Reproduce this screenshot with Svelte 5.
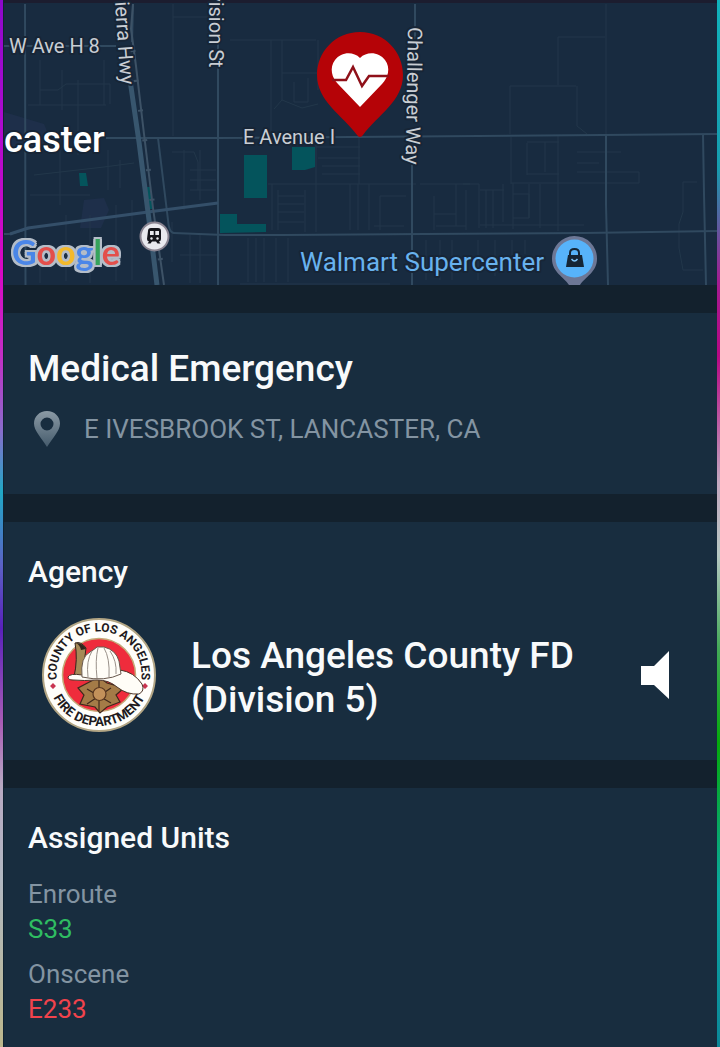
<script lang="ts">
	const title = 'Medical Emergency';
	const address = 'E IVESBROOK ST, LANCASTER, CA';
	const agency = 'Los Angeles County FD (Division 5)';

	const units = [
		{ status: 'Enroute', kind: 'enroute', names: ['S33'] },
		{ status: 'Onscene', kind: 'onscene', names: ['E233'] }
	];

	const parks = [
		'M244 155h23v43h-23z',
		'M292 147h23v20l-10 3h-13z',
		'M220 214h17v10h29v8l-46 1z',
		'M79 173h7l2 13h-8z',
		'M145 187h5l3 22h-6z'
	];

	const minorRoads = [
		'M40 60v45M62 70v40M78 80v75M104 60v45M40 90h18l8 -6h44v20M28 105h78M173 4v132M173 17h43',
		'M34 175l70 -8 30 -4M60 150v55M108 150v40M120 160v28M30 195h60M40 245v38M66 215v66M90 215v68M116 205v76M132 200v80',
		'M184 150v60M190 170h26M190 180h26M190 190h26M200 150v50M172 152h22l4 10v28M172 222v40M180 255h38M190 235v48M200 235v48',
		'M230 40h86M271 40v95M282 40v60l-8 9M318 40v50M282 73h36M294 82v20h14v-24M282 100l20 8 16 -4M316 136v96M316 147h44M318 158h42M322 166h38M322 174h38M359 137v47',
		'M268 184h148M272 184v46M278 190v40M278 196h26M278 204h26M278 212h26M278 222h26M305 190v42M350 184v46M358 184v46M369 184v46M380 196v34M380 196h26M374 226h30M420 184h50M434 196v34M434 214h22M456 184v42M466 190v40M436 226h30',
		'M248 238v44M256 238v44M264 238v44M276 238v44M288 238v44M240 284h150M426 240v40M440 240v40M452 240v40',
		'M606 4v130M558 37h47M558 37v48M510 86v48M510 86h66M577 86v40l10 8M511 137v47M527 143v32M527 142h32M545 142v30M558 136v95M527 174h32M511 183h128M577 152h44M577 163h22M577 172h62v11',
		'M463 184h16M479 184v44M480 190h24M486 190v38M493 190v38M503 184v38M513 183v46M513 194h16v24h-16M529 184v34M540 184v44M480 225h104M478 240v40M495 240v36M512 240v20M525 240v14M683 182h14M683 182v30l-4 12v24l4 22h20'
	];

	const roads = [
		'M4 46h112M25 4L25.5 285M4 234h6l20 -6',
		'M133 4l-1 38M218 4v281',
		'M106 138l112 0 384 -3 115 -1',
		'M158 138l10 82q1 13 6 13l50 2h60l140 -1 160 -1 133 -2',
		'M415 4v35M412 130v155M606 135v70l2 80M703 134l1 60 2 91'
	];

	const logo = [
		{ letter: 'G', color: '#4a86e8' },
		{ letter: 'o', color: '#e34f4b' },
		{ letter: 'o', color: '#f3b92b' },
		{ letter: 'g', color: '#4a86e8' },
		{ letter: 'l', color: '#35a35c' },
		{ letter: 'e', color: '#e34f4b' }
	];
</script>

<main class="page">
	<div class="edge left"></div>

	<div class="content">
		<svg class="map" viewBox="4 0 713 285" preserveAspectRatio="xMidYMid slice" role="img" aria-label="Incident map">
			<rect x="4" y="0" width="713" height="285" fill="#182b40" />

			<path d="M4 112l40 12 10 24H4zM84 200l20 -2 5 12 -8 18H80z" fill="#1e2f4a" />

			{#each parks as d}
				<path {d} fill="#04545c" />
			{/each}

			{#each minorRoads as d}
				<path {d} class="minor" />
			{/each}

			{#each roads as d}
				<path {d} class="road" />
			{/each}

			<path d="M10 234l18 -6L148 212l70 -9" class="road wide" />
			<path d="M130 80l9 62 10 78 8 65" class="highway" />
			<path d="M133 4l-2 25 5 37 8 68 9 74 11 77" class="rail" />
			<path d="M133 50l3 30 8 54 9 74 11 77" class="rail ties" />

			<rect x="4" y="0" width="713" height="3" fill="#1c1d2f" />

			<text class="street" x="9" y="53" font-size="20">W Ave H 8</text>
			<text class="street" transform="translate(115 2) rotate(86)" font-size="20">ierra Hwy</text>
			<text class="street" transform="translate(209 -8) rotate(90)" font-size="20">vision St</text>
			<text class="street" x="243" y="144" font-size="20">E Avenue I</text>
			<text class="street" transform="translate(408 27) rotate(91)" font-size="20">Challenger Way</text>
			<text class="city" x="4" y="152" font-size="36">caster</text>

			<text class="place" x="300" y="271" font-size="26">Walmart Supercenter</text>

			<!-- store pin -->
			<path d="M574 236a22.500 22.500 0 0 0 -22 23c0 13 12 18 17 26h11c5 -8 17 -13 17 -26a22.500 22.500 0 0 0 -23 -23z" fill="#6d7795" />
			<circle cx="574.500" cy="258.500" r="19" fill="#57b3fa" />
			<path d="M568 255h14l2 12h-18z" fill="#152535" />
			<path d="M570 257v-4q0 -4 4.500 -4t4.500 4v4" fill="none" stroke="#152535" stroke-width="2" />
			<path d="M571.500 259q3 4 6 0" fill="none" stroke="#7fc6fb" stroke-width="1.400" />

			<!-- train station -->
			<circle cx="154.500" cy="236.500" r="14" fill="#e9e9ee" stroke="#8a8491" stroke-width="2" />
			<path d="M148 231q0 -3 3 -3h7q3 0 3 3v8q0 2 -2 2.500l1.500 2h-3l-1.500 -2h-4l-1.500 2h-3l1.500 -2q-2 -.5 -2 -2.500z" fill="#15151b" />
			<path d="M150 231h3.700v4H150zM155.300 231h3.700v4h-3.700z" fill="#e9e9ee" />
			<circle cx="151.500" cy="238.500" r="1.200" fill="#e9e9ee" />
			<circle cx="157.500" cy="238.500" r="1.200" fill="#e9e9ee" />

			<!-- incident pin -->
			<path d="M360 32c-25 0 -43 20 -43 43 0 26 25 40 40 60q3 4 6 0c15 -20 40 -34 40 -60 0 -23 -18 -43 -43 -43z" fill="#b50307" />
			<path d="M360 58c-7 -7 -19 -6 -25 2 -6 8 -3 18 3 24l22 23 22 -23c6 -6 9 -16 3 -24 -6 -8 -18 -9 -25 -2z" fill="#fff" />
			<path d="M332 80h14l7 -13 9 19 7 -10h20" fill="none" stroke="#8f1019" stroke-width="2.500" />

			<text class="google" x="12" y="265" font-size="34">{#each logo as { letter, color }}<tspan fill={color}>{letter}</tspan>{/each}</text>
		</svg>

		<section class="incident">
			<h1>{title}</h1>
			<p class="address">
				<svg width="26" height="36" viewBox="0 0 26 36" aria-hidden="true">
					<defs>
						<linearGradient id="pin" x2="0" y2="1">
							<stop offset="0" stop-color="#8b9aa5" />
							<stop offset="1" stop-color="#455b6c" />
						</linearGradient>
					</defs>
					<path fill="url(#pin)" fill-rule="evenodd" d="M13 0C5.500 0 0 5.500 0 12.500 0 20 7 26 13 36 19 26 26 20 26 12.500 26 5.500 20.500 0 13 0zm0 6.500a6.500 6.500 0 1 1 0 13 6.500 6.500 0 0 1 0 -13z" />
				</svg>
				<span>{address}</span>
			</p>
		</section>

		<section class="agency">
			<h2>Agency</h2>
			<div class="agency-row">
				<svg class="seal" width="116" height="116" viewBox="0 0 116 116" role="img" aria-label="Fire department seal">
					<defs>
						<path id="arc-top" d="M16.500 66A42.500 42.500 0 1 1 99.500 66" />
						<path id="arc-bottom" d="M8 68A51 51 0 0 0 108 68" />
					</defs>
					<circle cx="58" cy="58" r="56" fill="#fffefa" stroke="#b3a685" stroke-width="2" />
					<circle cx="58" cy="58" r="36.500" fill="#ef2c3c" stroke="#c5aa78" stroke-width="1.500" />
					<text class="seal-text" font-size="12"><textPath href="#arc-top" startOffset="50%" text-anchor="middle">COUNTY OF LOS ANGELES</textPath></text>
					<text class="seal-text" font-size="13"><textPath href="#arc-bottom" startOffset="50%" text-anchor="middle">FIRE DEPARTMENT</textPath></text>
					<path d="M12 66l3 3 -3 3 -3 -3zM104 66l3 3 -3 3 -3 -3z" fill="#c93550" />

					<!-- badge -->
					<path d="M58 60L37 71l6 7 -4 9 15 3 5 6 7 -6 13 -5 -4 -7 8 -7 -17 -5z" fill="#a47b47" stroke="#40291c" stroke-width="1.200" />
					<path d="M46 72l24 14M70 71L46 87M58 62v32" stroke="#40291c" stroke-width="1.200" />
					<circle cx="58.500" cy="77" r="6.500" fill="#c3915a" stroke="#5a3720" stroke-width="1.200" />

					<!-- helmet -->
					<path d="M34 26q6 -2 11 5l-4 32 -8 -3q4 -18 1 -34z" fill="#a58a57" stroke="#33251c" />
					<path d="M35 26q7 0 10 6l-5 1q-1 -5 -5 -7z" fill="#30251d" />
					<path d="M27 60q2 -4 14 -2 20 4 38 -5 14 2 22 14 3 7 -3 10 -12 1 -22 -7 -8 -7 -20 -7 -13 1 -24 0 -5 0 -5 -3z" fill="#fffdf7" stroke="#4d3528" />
					<path d="M41 60q-2 -20 8 -25 5 -3 7 -5h7q12 3 15 14l2 13q-16 8 -39 3z" fill="#fffdf7" stroke="#68584d" />
					<path d="M51 34q-6 10 -4 26M57 31q-3 12 -1 30M63 31q6 10 5 29M69 34q7 10 6 23" fill="none" stroke="#99918a" />
				</svg>

				<p class="agency-name">{agency}</p>

				<button type="button" aria-label="Play audio">
					<svg width="28" height="48" viewBox="0 0 28 48" aria-hidden="true">
						<path d="M0 15h13L28 0v48L13 34H0z" fill="#fff" />
					</svg>
				</button>
			</div>
		</section>

		<section class="units">
			<h2>Assigned Units</h2>
			<dl>
				{#each units as group}
					<div>
						<dt>{group.status}</dt>
						{#each group.names as name}
							<dd class={group.kind}>{name}</dd>
						{/each}
					</div>
				{/each}
			</dl>
		</section>
	</div>

	<div class="edge right"></div>
</main>

<style>
	:global(body) {
		margin: 0;
		background: #182d3f;
	}

	.page {
		display: grid;
		grid-template-columns: 4px minmax(0, 1fr) 3px;

		min-height: 100vh;

		font-family: Roboto, 'Liberation Sans', sans-serif;
		color: #f8fafb;
		background: #13212d;
	}

	.left {
		border-right: 1px solid #102331;
		background: linear-gradient(#8d08cc 0%, #ae0bcf 12%, #d908c4 26%, #c22fc4 34%, #8a6bcb 41%, #20a8c5 47%, #5b61c5 54%, #5921bb 60%, #a95cb5 69%, #b8a9c2 75%, #b1b8c2 84%, #bcb78c 100%);
	}

	.right {
		background: linear-gradient(#10b2bc 0%, #169cae 16%, #a51b91 27%, #b70783 34%, #c4a8c0 46%, #b7c8c3 53%, #43a957 62%, #04a90c 71%, #0aa7a2 85%, #0b8799 100%);
	}

	.content {
		display: flex;
		flex-direction: column;
		gap: 28px;
	}

	.map {
		display: block;
		width: 100%;
		height: auto;
	}

	.map path.minor {
		fill: none;
		stroke: #22374a;
		stroke-width: 1;
	}

	.road,
	.highway,
	.rail {
		fill: none;
		stroke: #30495f;
		stroke-width: 2;
	}

	.road.wide {
		stroke: #344f69;
		stroke-width: 3;
	}

	.highway {
		stroke: #38566e;
		stroke-width: 5;
	}

	.rail {
		stroke: #3d5266;
	}

	.ties {
		stroke-width: 5;
		stroke-dasharray: 2 28;
	}

	.street,
	.city,
	.place {
		paint-order: stroke;
		stroke: #172536;
		stroke-width: 4px;
		stroke-linejoin: round;
	}

	.street {
		fill: #c9ced4;
	}

	.city {
		font-weight: 500;
		fill: #fff;
	}

	.place {
		fill: #68b2ee;
	}

	.google {
		font-family: Lato, sans-serif;
		font-weight: 700;
		filter: drop-shadow(2px 0 #b4bdc8) drop-shadow(-2px 0 #b4bdc8) drop-shadow(0 2px #b4bdc8) drop-shadow(0 -2px #b4bdc8);
	}

	section {
		padding: 32px 24px;
		background: #182d3f;
	}

	h1,
	h2,
	p,
	dl,
	dd {
		margin: 0;
	}

	h1 {
		font-size: 37px;
		font-weight: 500;
		line-height: 48px;
	}

	h2 {
		font-size: 30px;
		font-weight: 500;
		line-height: 36px;
	}

	.address {
		display: flex;
		align-items: center;
		gap: 24px;

		margin-top: 18px;
		padding: 0 6px 15px;

		font-size: 26px;
		line-height: 36px;
		color: #8394a2;
	}

	.agency {
		padding-bottom: 27px;
	}

	.agency-row {
		display: flex;
		align-items: center;

		margin-top: 27px;
		padding: 0 24px 0 13px;
	}

	.seal {
		flex: none;
	}

	.agency-row .seal-text {
		font-weight: 700;
		fill: #20191c;
	}

	.agency-name {
		flex: 1;
		padding: 5px 40px 0 34px;

		font-size: 37px;
		font-weight: 500;
		line-height: 44px;
	}

	button {
		flex: none;
		padding: 0;
		border: 0;
		background: none;
		cursor: pointer;
	}

	button svg {
		display: block;
	}

	.units {
		flex: 1;
		padding-bottom: 16px;
	}

	dl {
		display: flex;
		flex-direction: column;
		gap: 10px;

		margin-top: 21px;

		font-size: 26px;
		line-height: 35px;
	}

	dt {
		color: #8394a2;
	}

	.enroute {
		color: #2fbd62;
	}

	.onscene {
		color: #f0434c;
	}
</style>
